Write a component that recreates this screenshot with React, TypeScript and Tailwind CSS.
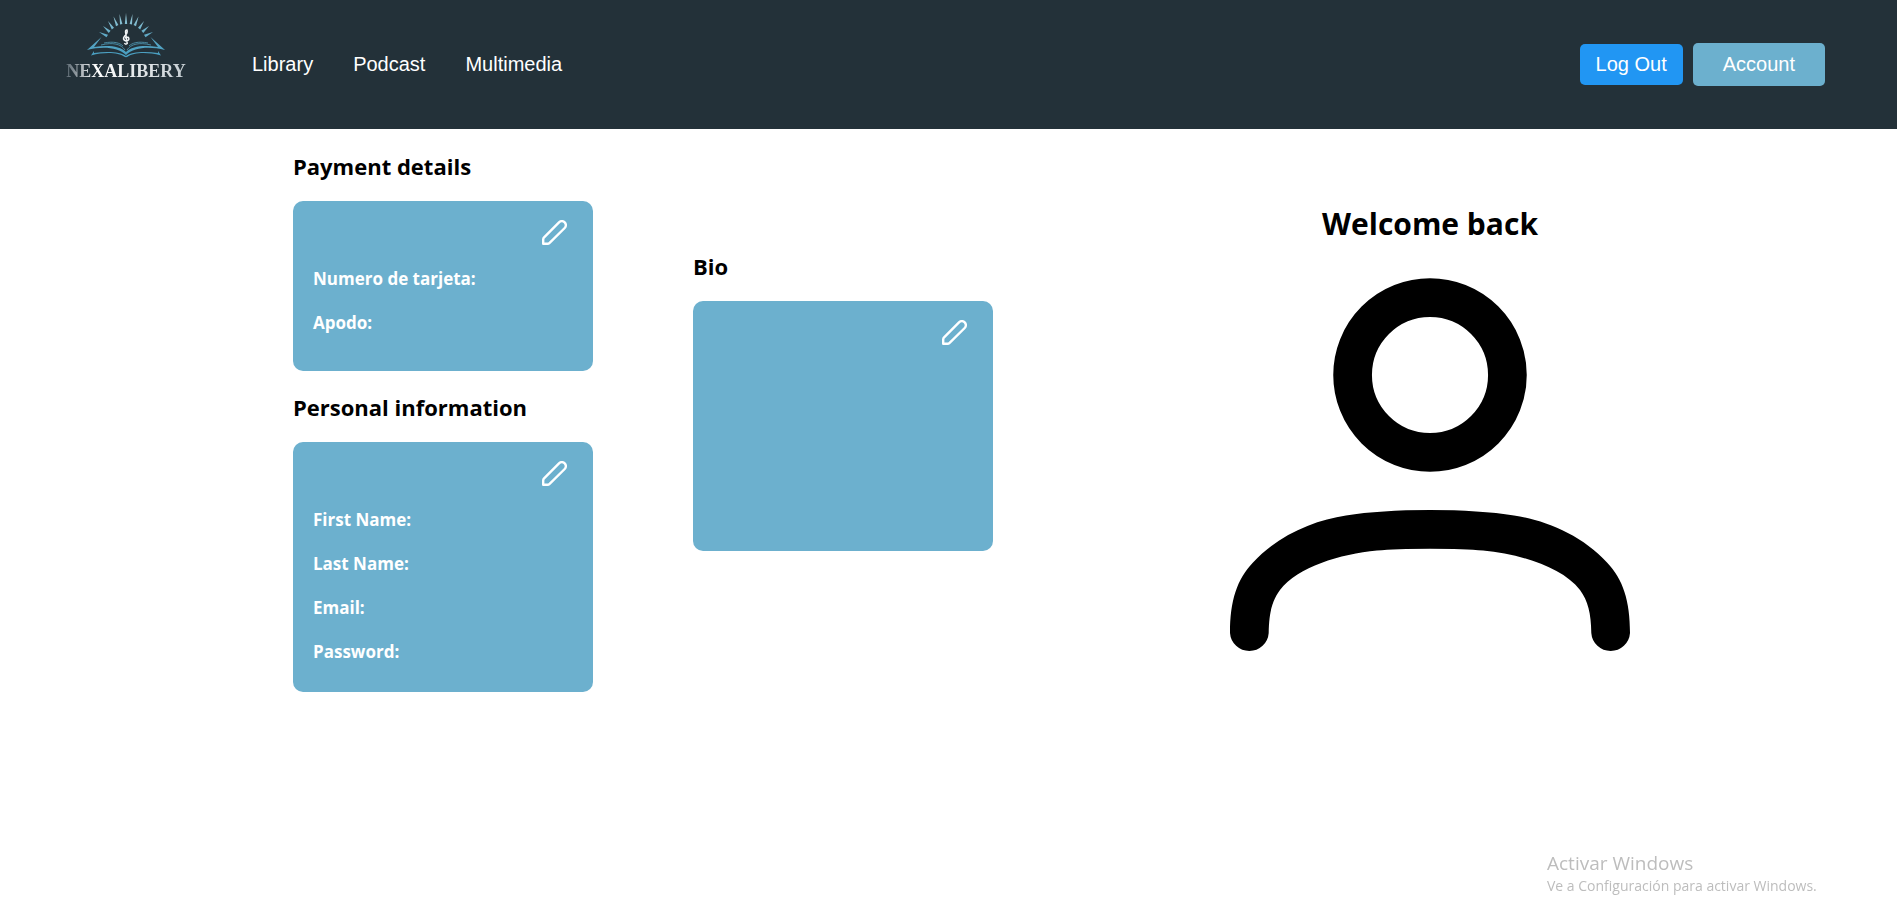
import { useId } from "react";

const BRAND = "bg-[#6cb0ce]";

function Logo() {
  const id = useId();
  return (
    <a href="#" aria-label="Nexalibery" className="flex w-[120px] flex-col items-center">
      <svg viewBox="0 0 80 46" className="h-[46px] w-20" fill="none" aria-hidden="true">
        <defs>
          <linearGradient id={id} x1="0" y1="0" x2="0" y2="46" gradientUnits="userSpaceOnUse">
            <stop offset="0" stopColor="#a3cfdb" />
            <stop offset="0.500" stopColor="#5fa9c6" />
            <stop offset="1" stopColor="#459dc0" />
          </linearGradient>
        </defs>
        <g fill={`url(#${id})`}>
          <path d="M40 1 L41.200 12 H38.800Z" />
          <path d="M33.500 2 L36.400 12 L34 12.500Z" />
          <path d="M46.500 2 L46 12.500 L43.600 12Z" />
          <path d="M27.500 4.500 L32.400 13 L30 14.200Z" />
          <path d="M52.500 4.500 L50 14.200 L47.600 13Z" />
          <path d="M22 9 L28 15.800 L25.800 17.500Z" />
          <path d="M58 9 L54.200 17.500 L52 15.800Z" />
          <path d="M17 14 L24.600 18.800 L22.700 21Z" />
          <path d="M63 14 L57.300 21 L55.400 18.800Z" />
          <path d="M13 20 L22 22.700 L20.500 25.200Z" />
          <path d="M67 20 L59.500 25.200 L58 22.700Z" />
          <path d="M15.500 25 L1 38 C16 34 32 35 40 43 C48 35 64 34 79 38 L64.500 25 L72 35 C58 33 46 34 40 40 C34 34 22 33 8 35Z" />
          <path d="M8 39 L5 43.500 C20 39.500 33 41 38 44.500 Q40 46 42 44.500 C47 41 60 39.500 75 43.500 L72 39 V41 C58 39 45 40 40 44 C35 40 22 39 8 41Z" />
        </g>
        <path d="M15 33 C27 30 35 32 39 38 M18 31 C28 29 34 31 37 34 M65 33 C53 30 45 32 41 38 M62 31 C52 29 46 31 43 34" stroke="#4c91ab" strokeWidth="0.900" />
        <path d="M38.500 31 Q39.500 33 41.200 31.500 L39.500 20 Q39.500 17.500 41 18 Q42 21 38.700 24 Q35.700 27.500 40 29 Q44 28.500 42.500 25.500 Q40 24 39.200 26.500" stroke="#f1f4f6" strokeWidth="1.500" />
      </svg>
      <span className="bg-linear-to-r from-[#5c6972] via-white via-25% to-[#c5cdd2] bg-clip-text font-['Liberation_Serif',serif] text-lg leading-[26px] font-bold text-transparent">
        NEXALIBERY
      </span>
    </a>
  );
}

function EditButton({ label }: { label: string }) {
  return (
    <button type="button" aria-label={label} className="block size-[25px] cursor-pointer">
      <svg viewBox="0 0 25 25" className="size-full" fill="none" stroke="white" strokeWidth="2.400" strokeLinejoin="round">
        <path d="M1.200 23.800 V19.500 Q1.200 18.300 2.100 17.400 L17 2.300 A4 4 0 0 1 22.700 8 L7.600 22.900 Q6.700 23.800 5.500 23.800Z" />
      </svg>
    </button>
  );
}

type PanelProps = { title: string; fields: string[]; size: string };

function Panel({ title, fields, size }: PanelProps) {
  return (
    <section className="flex flex-col gap-[18px]">
      <h2 className="text-[22px] leading-[33px] font-bold">{title}</h2>
      <div className={`flex w-[300px] flex-col rounded-[10px] px-5 pt-[19px] pb-5 text-white ${BRAND} ${size}`}>
        <div className="flex justify-end pr-1.5">
          <EditButton label={`Edit ${title}`} />
        </div>
        <dl className="mt-[22px] flex flex-col gap-5">
          {fields.map((field) => (
            <div key={field}>
              <dt className="text-[17px] leading-6 font-bold">{field}:</dt>
            </div>
          ))}
        </dl>
      </div>
    </section>
  );
}

function Avatar() {
  return (
    <svg viewBox="0 0 400 375" className="w-[400px]" role="img" aria-label="User">
      <circle cx="200" cy="97" r="77.400" fill="none" stroke="black" strokeWidth="38.700" />
      <path d="M0 355 C0 323 7 301 23 284.500 C48 257 85 242 116 237.500 Q150 232 200 232 Q250 232 284 237.500 C315 242 352 257 377 284.500 C393 301 400 323 400 355 A19.400 19.400 0 0 1 361.300 355 C361 335 358 323 350 312 C332 289 290 276 253 272.500 Q235 270.700 200 270.700 Q165 270.700 147 272.500 C110 276 68 289 50 312 C42 323 39 335 38.700 355 A19.400 19.400 0 0 1 0 355Z" fill="black" />
    </svg>
  );
}

export default function App() {
  return (
    <div className="flex min-h-screen flex-col bg-white font-['Open_Sans',sans-serif] text-black">
      <header className="mr-1 flex h-[129px] items-center bg-[#233139] pr-[72px] pl-[66px] font-['Liberation_Sans',sans-serif] text-xl text-white">
        <div className="self-start pt-3">
          <Logo />
        </div>
        <nav className="ml-[66px] flex gap-10 pb-0.5">
          <a href="#">Library</a>
          <a href="#">Podcast</a>
          <a href="#">Multimedia</a>
        </nav>
        <div className="ml-auto flex items-center gap-2.5">
          <button type="button" className="h-[41px] cursor-pointer rounded-[5px] bg-[#2196f3] px-4 pb-0.5">
            Log Out
          </button>
          <button type="button" className={`h-[43px] cursor-pointer rounded-[5px] px-[30px] pb-0.5 ${BRAND}`}>
            Account
          </button>
        </div>
      </header>

      <main className="flex flex-1 gap-[100px] pt-[21px] pl-[293px]">
        <div className="flex flex-col gap-5">
          <Panel title="Payment details" fields={["Numero de tarjeta", "Apodo"]} size="min-h-[170px]" />
          <Panel
            title="Personal information"
            fields={["First Name", "Last Name", "Email", "Password"]}
            size="min-h-[250px]"
          />
        </div>
        <div className="pt-[100px]">
          <Panel title="Bio" fields={[]} size="min-h-[250px]" />
        </div>
        <section className="-ml-[100px] flex flex-1 flex-col items-center gap-[33px] pt-[52px] pr-[34px]">
          <h1 className="text-[30px] leading-[43px] font-bold">Welcome back</h1>
          <Avatar />
        </section>
      </main>

      <aside className="fixed right-[78px] bottom-[18px] w-[276px] text-[#bdbdbd]">
        <p className="text-[19px] leading-[25px]">Activar Windows</p>
        <p className="text-sm leading-5">Ve a Configuración para activar Windows.</p>
      </aside>
    </div>
  );
}
